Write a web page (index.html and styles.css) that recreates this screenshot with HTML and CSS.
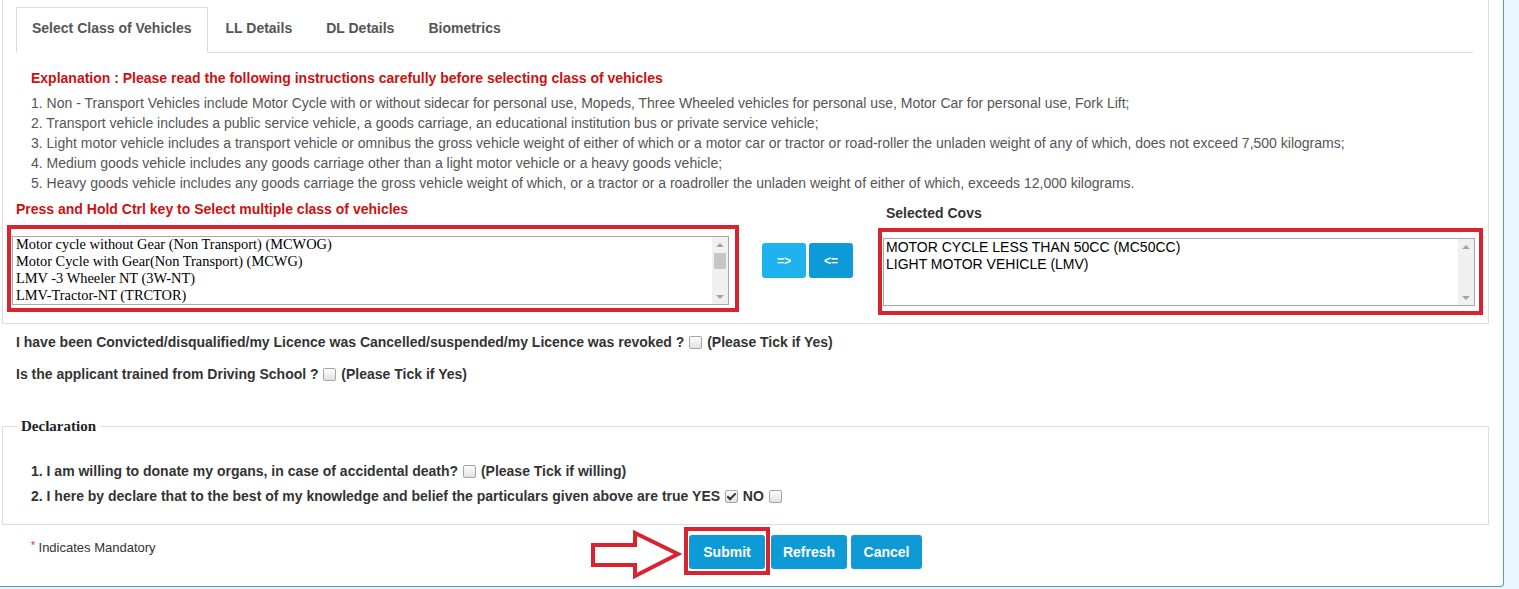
FILE: index.html
```html
<!DOCTYPE html>
<html lang="en">
<head>
  <meta charset="UTF-8">
  <title>Select Class of Vehicles</title>
  <link rel="stylesheet" href="styles.css">
</head>
<body>
  <div class="page">
    <div class="panel">
      <ul class="tabs">
        <li class="tab active">Select Class of Vehicles</li>
        <li class="tab">LL Details</li>
        <li class="tab">DL Details</li>
        <li class="tab">Biometrics</li>
      </ul>

      <div class="explain">
        <p class="explain-title">Explanation : Please read the following instructions carefully before selecting class of vehicles</p>
        <ol class="rules">
          <li>1. Non - Transport Vehicles include Motor Cycle with or without sidecar for personal use, Mopeds, Three Wheeled vehicles for personal use, Motor Car for personal use, Fork Lift;</li>
          <li>2. Transport vehicle includes a public service vehicle, a goods carriage, an educational institution bus or private service vehicle;</li>
          <li>3. Light motor vehicle includes a transport vehicle or omnibus the gross vehicle weight of either of which or a motor car or tractor or road-roller the unladen weight of any of which, does not exceed 7,500 kilograms;</li>
          <li>4. Medium goods vehicle includes any goods carriage other than a light motor vehicle or a heavy goods vehicle;</li>
          <li>5. Heavy goods vehicle includes any goods carriage the gross vehicle weight of which, or a tractor or a roadroller the unladen weight of either of which, exceeds 12,000 kilograms.</li>
        </ol>
      </div>

      <div class="cov-row">
        <div class="cov-left">
          <label class="hint">Press and Hold Ctrl key to Select multiple class of vehicles</label>
          <div class="mark mark-left">
            <div class="listbox serif">
              <div class="options">
                <div class="opt">Motor cycle without Gear (Non Transport) (MCWOG)</div>
                <div class="opt">Motor Cycle with Gear(Non Transport) (MCWG)</div>
                <div class="opt">LMV -3 Wheeler NT (3W-NT)</div>
                <div class="opt">LMV-Tractor-NT (TRCTOR)</div>
              </div>
              <div class="scrollbar">
                <span class="sb-btn up"></span>
                <div class="sb-track"><span class="sb-thumb"></span></div>
                <span class="sb-btn down"></span>
              </div>
            </div>
          </div>
        </div>

        <div class="move">
          <button class="btn-move light">=&gt;</button>
          <button class="btn-move">&lt;=</button>
        </div>

        <div class="cov-right">
          <label class="selected-label">Selected Covs</label>
          <div class="mark mark-right">
            <div class="listbox sans">
              <div class="options">
                <div class="opt">MOTOR CYCLE LESS THAN 50CC (MC50CC)</div>
                <div class="opt">LIGHT MOTOR VEHICLE (LMV)</div>
              </div>
              <div class="scrollbar">
                <span class="sb-btn up"></span>
                <div class="sb-track"></div>
                <span class="sb-btn down"></span>
              </div>
            </div>
          </div>
        </div>
      </div>
    </div>

    <p class="question">I have been Convicted/disqualified/my Licence was Cancelled/suspended/my Licence was revoked ? <input type="checkbox"> (Please Tick if Yes)</p>
    <p class="question">Is the applicant trained from Driving School ? <input type="checkbox"> (Please Tick if Yes)</p>

    <fieldset class="declaration">
      <legend>Declaration</legend>
      <p class="decl-item first">1. I am willing to donate my organs, in case of accidental death? <input type="checkbox"> (Please Tick if willing)</p>
      <p class="decl-item">2. I here by declare that to the best of my knowledge and belief the particulars given above are true YES <input type="checkbox" checked> NO <input type="checkbox"></p>
    </fieldset>

    <div class="actions">
      <div class="mandatory"><span class="star">*</span> Indicates Mandatory</div>
      <svg class="arrow" width="92" height="50" viewBox="0 0 92 50">
        <polygon points="3,15 45,15 45,3 88,24 45,46 45,35 3,35" fill="#fff" stroke="#d9232e" stroke-width="4"/>
      </svg>
      <div class="mark mark-submit">
        <button class="btn">Submit</button>
      </div>
      <button class="btn btn-refresh">Refresh</button>
      <button class="btn btn-cancel">Cancel</button>
    </div>
  </div>
</body>
</html>
```

FILE: styles.css
```css
:root {
  --red: #d9232e;
  --label-red: #cc1111;
  --blue: #0e9ad6;
  --blue-light: #1eb2ef;
  --line: #dddddd;
  --text: #333333;
}

* {
  box-sizing: border-box;
}

body {
  margin: 0;
  background-color: #e9f6fd;
  font-family: "Liberation Sans", Arial, sans-serif;
  font-size: 14px;
  color: var(--text);
}

p, ol {
  margin: 0;
  padding: 0;
}

.page {
  width: 1504px;
  height: 587px;
  padding-left: 2px;
  background: #fff;
  border-right: 1px solid #4a9fbf;
  border-bottom: 1px solid #4a9fbf;
  border-bottom-right-radius: 4px;
}

/* top panel */
.panel {
  width: 1487px;
  padding-top: 7px;
  padding-bottom: 8px;
  border: 1px solid var(--line);
  border-top: none;
}

.tabs {
  display: flex;
  list-style: none;
  margin: 0 15px 0 13px;
  padding: 0;
  border-bottom: 1px solid var(--line);
}

.tab {
  margin-right: 2px;
  margin-bottom: -1px;
  padding: 10px 15px 14px;
  line-height: 20px;
  font-weight: bold;
  color: #555;
  border: 1px solid transparent;
}

.tab.active {
  background: #fff;
  border-color: var(--line);
  border-bottom-color: #fff;
}

.explain {
  padding-left: 28px;
}

.explain-title {
  margin-top: 17px;
  line-height: 17px;
  font-weight: bold;
  color: var(--label-red);
}

.rules {
  list-style: none;
  margin-top: 6px;
  line-height: 20px;
  color: #555;
}

/* class of vehicle selection */
.cov-row {
  display: flex;
  align-items: flex-start;
  margin-top: 8px;
}

.cov-left {
  margin-left: 4px;
}

.hint {
  display: block;
  padding-left: 9px;
  line-height: 17px;
  font-weight: bold;
  color: var(--label-red);
}

.mark {
  border: 4px solid var(--red);
}

.mark-left {
  width: 732px;
  height: 87px;
  margin-top: 7px;
  padding: 7px 6px 3px 1px;
}

.listbox {
  display: flex;
  height: 69px;
  border: 1px solid #a9a9a9;
  background: #fff;
  color: #000;
}

.options {
  flex: 1;
}

.opt {
  padding: 0 3px;
  line-height: 17px;
  white-space: nowrap;
}

.serif {
  font-family: "Liberation Serif", "Times New Roman", serif;
  font-size: 14.4px;
}

.serif .opt:first-child {
  margin-top: -1px;
}

.sans {
  font-family: "Liberation Sans", Arial, sans-serif;
  font-size: 14px;
}

.sans .opt {
  padding-left: 2px;
}

.scrollbar {
  display: flex;
  flex-direction: column;
  width: 16px;
  background: #f0f0f0;
}

.sb-btn {
  display: flex;
  justify-content: center;
  align-items: center;
  height: 15px;
}

.sb-btn::before {
  content: "";
  border-left: 4px solid transparent;
  border-right: 4px solid transparent;
}

.sb-btn.up::before {
  border-bottom: 4px solid #a3a3a3;
}

.sb-btn.down::before {
  border-top: 4px solid #a3a3a3;
}

.sb-track {
  flex: 1;
  padding: 1px 2px 0;
}

.sb-thumb {
  display: block;
  height: 16px;
  background: #c6c6c6;
}

.move {
  display: flex;
  gap: 3px;
  margin-top: 42px;
  margin-left: 23px;
}

.btn-move {
  width: 44px;
  height: 35px;
  padding: 0;
  border: none;
  border-radius: 3px;
  background: var(--blue);
  color: #fff;
  font-family: "Liberation Sans", Arial, sans-serif;
  font-size: 12px;
  font-weight: bold;
}

.btn-move.light {
  background: var(--blue-light);
}

.cov-right {
  margin-top: 4px;
  margin-left: 25px;
}

.selected-label {
  display: block;
  padding-left: 8px;
  line-height: 17px;
  font-weight: bold;
}

.mark-right {
  width: 605px;
  height: 87px;
  margin-top: 6px;
  padding: 6px 4px 5px 1px;
}

.mark-right .listbox {
  height: 68px;
}

/* questions */
.question {
  margin-top: 12px;
  padding-left: 14px;
  line-height: 20px;
  font-weight: bold;
}

.question:first-of-type {
  margin-top: 8px;
}

input[type="checkbox"] {
  appearance: none;
  position: relative;
  width: 13px;
  height: 13px;
  margin: 0 1px;
  vertical-align: -2px;
  border: 1px solid #a5a5a5;
  border-radius: 2px;
  background: linear-gradient(#fdfdfd, #e2e2e2);
}

input[type="checkbox"]:checked::before {
  content: "";
  position: absolute;
  left: 3px;
  top: 0;
  width: 3px;
  height: 7px;
  border: solid #333;
  border-width: 0 2px 2px 0;
  transform: rotate(45deg);
}

.declaration {
  width: 1487px;
  margin: 34px 0 0;
  padding: 0 14px 18px;
  border: 1px solid var(--line);
}

.declaration legend {
  padding: 0 4px;
  line-height: 17px;
  font-family: "Liberation Serif", "Times New Roman", serif;
  font-size: 15px;
  font-weight: bold;
  color: #222;
}

.decl-item {
  margin-top: 5px;
  padding-left: 14px;
  line-height: 20px;
  font-weight: bold;
}

.decl-item.first {
  margin-top: 26px;
}

/* bottom actions */
.actions {
  display: flex;
  align-items: flex-start;
  margin-top: 2px;
}

.mandatory {
  width: 588px;
  margin-top: 11px;
  padding-left: 29px;
  line-height: 16px;
  font-size: 13px;
}

.star {
  color: var(--red);
  font-size: 10px;
  vertical-align: 3px;
}

.arrow {
  display: block;
  margin-top: 3px;
}

.mark-submit {
  margin-left: 2px;
  padding: 4px 1px 2px;
}

.btn {
  display: block;
  width: 76px;
  height: 34px;
  padding: 0;
  border: none;
  border-radius: 3px;
  background: var(--blue);
  color: #fff;
  font-family: "Liberation Sans", Arial, sans-serif;
  font-size: 14px;
  font-weight: bold;
}

.btn-refresh {
  margin-top: 8px;
  margin-left: 1px;
}

.btn-cancel {
  width: 71px;
  margin-top: 8px;
  margin-left: 4px;
}
```
